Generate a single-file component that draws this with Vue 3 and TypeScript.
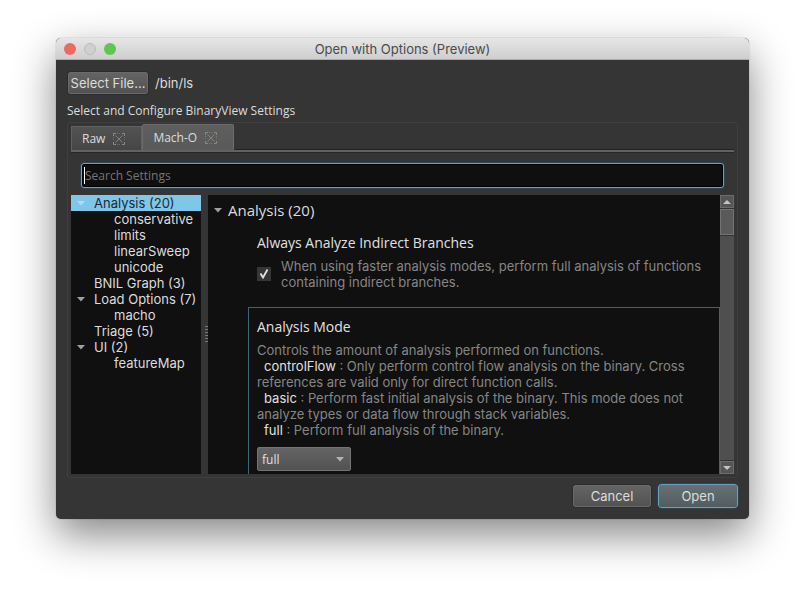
<script setup lang="ts">
import { ref } from 'vue'

interface TreeItem {
  label: string
  level: number
  open?: boolean
  selected?: boolean
}

const tabs: string[] = ['Raw', 'Mach-O']
const activeTab = ref('Mach-O')
const search = ref('')
const indirect = ref(true)
const mode = ref('full')

const tree: TreeItem[] = [
  { label: 'Analysis (20)', level: 0, open: true, selected: true },
  { label: 'conservative', level: 1 },
  { label: 'limits', level: 1 },
  { label: 'linearSweep', level: 1 },
  { label: 'unicode', level: 1 },
  { label: 'BNIL Graph (3)', level: 0 },
  { label: 'Load Options (7)', level: 0, open: true },
  { label: 'macho', level: 1 },
  { label: 'Triage (5)', level: 0 },
  { label: 'UI (2)', level: 0, open: true },
  { label: 'featureMap', level: 1 },
]
</script>

<template>
  <main class="page">
    <section class="window">
      <header class="titlebar">
        <div class="lights">
          <button class="light red" type="button" aria-label="Close"></button>
          <button class="light off" type="button" aria-label="Minimize" disabled></button>
          <button class="light green" type="button" aria-label="Zoom"></button>
        </div>
        <h1 class="title">Open with Options (Preview)</h1>
      </header>

      <div class="body">
        <div class="file-row">
          <button class="btn file-btn" type="button">Select File...</button>
          <span class="path">/bin/ls</span>
        </div>
        <p class="caption">Select and Configure BinaryView Settings</p>

        <div class="frame">
          <div class="tabs">
            <div v-for="t in tabs" :key="t" class="tab" :class="{ active: t === activeTab }">
              <button class="tab-name" type="button" @click="activeTab = t">{{ t }}</button>
              <button class="tab-close" type="button" :aria-label="'Close ' + t">
                <svg width="12" height="12" viewBox="0 0 12 12" fill="none" stroke="#8a8a80">
                  <path d="M.5 3V.5H3M9 .5H11.500V3M11.500 9V11.500H9M3 11.500H.5V9" />
                  <path d="M4 .5H8M.5 4V8M11.500 4V8M4 11.500H8" stroke-opacity=".6" stroke-dasharray="1 1" />
                  <path d="M2.500 2.500L9.500 9.500M9.500 2.500L2.500 9.500" stroke-opacity=".85" />
                </svg>
              </button>
            </div>
          </div>

          <div class="search">
            <input v-model="search" type="text" placeholder="Search Settings" aria-label="Search Settings" />
            <span class="caret"></span>
          </div>

          <div class="split">
            <ul class="tree">
              <li
                v-for="item in tree"
                :key="item.label"
                :class="{ child: item.level === 1, selected: item.selected }"
              >
                <svg v-if="item.open" class="arrow" width="8" height="5" viewBox="0 0 8 5">
                  <path d="M0 0H8L4 4.500Z" fill="currentColor" />
                </svg>
                <span>{{ item.label }}</span>
              </li>
            </ul>

            <div class="handle"><span class="grip"></span></div>

            <div class="pane">
              <div class="content">
                <h2 class="group">
                  <svg class="arrow" width="8" height="5" viewBox="0 0 8 5">
                    <path d="M0 0H8L4 4.500Z" fill="currentColor" />
                  </svg>
                  <span>Analysis (20)</span>
                </h2>

                <div class="setting">
                  <h3>Always Analyze Indirect Branches</h3>
                  <div class="check-row">
                    <span class="check">
                      <input id="indirect" v-model="indirect" type="checkbox" />
                      <svg v-if="indirect" width="14" height="14" viewBox="0 0 14 14" fill="none">
                        <path d="M3.500 6.500L6 10.500L10.500 2.500" stroke="#e2e2e2" stroke-width="1.800" />
                      </svg>
                    </span>
                    <label for="indirect">
                      When using faster analysis modes, perform full analysis of functions containing indirect branches.
                    </label>
                  </div>
                </div>

                <div class="setting focused">
                  <h3><label for="mode">Analysis Mode</label></h3>
                  <div class="desc">
                    <p>Controls the amount of analysis performed on functions.</p>
                    <p class="option">
                      <b>controlFlow</b> : Only perform control flow analysis on the binary. Cross references are valid
                      only for direct function calls.
                    </p>
                    <p class="option">
                      <b>basic</b> : Perform fast initial analysis of the binary. This mode does not analyze types or
                      data flow through stack variables.
                    </p>
                    <p class="option"><b>full</b> : Perform full analysis of the binary.</p>
                  </div>
                  <div class="select">
                    <select id="mode" v-model="mode">
                      <option>controlFlow</option>
                      <option>basic</option>
                      <option>full</option>
                    </select>
                    <svg class="arrow" width="8" height="5" viewBox="0 0 8 5">
                      <path d="M0 0H8L4 4.500Z" fill="currentColor" />
                    </svg>
                  </div>
                </div>
              </div>

              <div class="scrollbar">
                <button class="step" type="button" aria-label="Scroll up">
                  <svg width="8" height="4" viewBox="0 0 8 4"><path d="M0 4H8L4 0Z" fill="#c4c4c4" /></svg>
                </button>
                <div class="track"><div class="thumb"></div></div>
                <button class="step" type="button" aria-label="Scroll down">
                  <svg width="8" height="4" viewBox="0 0 8 4"><path d="M0 0H8L4 4Z" fill="#c4c4c4" /></svg>
                </button>
              </div>
            </div>
          </div>
        </div>

        <footer class="actions">
          <button class="btn cancel" type="button">Cancel</button>
          <button class="btn primary" type="button">Open</button>
        </footer>
      </div>
    </section>
  </main>
</template>

<style>
body {
  background: #fff;
}
</style>

<style scoped>
* {
  box-sizing: border-box;
}
h1,
h2,
h3,
p,
ul {
  margin: 0;
  padding: 0;
  font-weight: 400;
}
button {
  margin: 0;
  padding: 0;
  border: 0;
  background: none;
  color: inherit;
  font: inherit;
}
.page {
  display: flex;
  height: 100vh;
  min-height: 400px;
  padding: 38px 56px 74px;
  overflow: hidden;
  font-family: Inter, 'Liberation Sans', sans-serif;
  font-size: 13px;
  line-height: 16px;
  color: #dcdcdc;
}
.window {
  flex: 1;
  min-width: 0;
  display: flex;
  flex-direction: column;
  border-radius: 5px;
  background: #353535;
  box-shadow: 0 0 1px rgba(0, 0, 0, 0.5), 0 16px 42px rgba(0, 0, 0, 0.48);
}
.titlebar {
  display: grid;
  grid-template-columns: 1fr auto 1fr;
  align-items: center;
  height: 22px;
  padding: 0 8px;
  border-radius: 5px 5px 0 0;
  border-bottom: 1px solid #adadad;
  background: linear-gradient(#e6e6e6, #cecece);
}
.lights {
  display: flex;
  gap: 8px;
}
.light {
  width: 12px;
  height: 12px;
  border-radius: 50%;
}
.red {
  background: #ed6a5e;
}
.off {
  background: #d0d0d0;
  border: 1px solid #bcbcbc;
}
.green {
  background: #61c554;
}
.title {
  font-size: 13px;
  color: #4b4b4b;
}
.body {
  flex: 1;
  min-height: 0;
  display: flex;
  flex-direction: column;
  padding: 12px 11px 11px;
}
.file-row {
  display: flex;
  align-items: center;
  gap: 7px;
  padding-left: 1px;
}
.btn {
  height: 22px;
  border: 1px solid #6a6a6a;
  border-radius: 2px;
  outline: 1px solid #2c2c2c;
  background: linear-gradient(#646464, #525252);
}
.file-btn {
  width: 80px;
}
.caption {
  margin-top: 8px;
  font-family: 'Open Sans', 'Noto Sans', sans-serif;
  font-size: 12px;
  line-height: 18px;
}
.frame {
  flex: 1;
  min-height: 0;
  display: flex;
  flex-direction: column;
  margin-top: 2px;
  padding: 2px 3px 3px;
  border: 1px solid #3f3f3f;
  border-radius: 2px;
}
.tabs {
  display: flex;
  align-items: flex-end;
  height: 27px;
  border-bottom: 2px solid #626262;
  box-shadow: 0 1px 0 #262626, inset 0 -1px 0 #222;
}
.tab {
  display: flex;
  align-items: center;
  gap: 8px;
  height: 24px;
  padding: 0 16px 0 10px;
  border: 1px solid #606060;
  border-bottom: 0;
  background: linear-gradient(#525252, #464646);
  font-family: 'Open Sans', 'Noto Sans', sans-serif;
  font-size: 12px;
}
.tab.active {
  height: 26px;
  border-color: #6c6c6c;
  border-radius: 2px 2px 0 0;
  background: linear-gradient(#5e5e5e, #5a5a5a);
}
.tab-close {
  display: flex;
}
.search {
  position: relative;
  margin: 11px 10px 7px;
}
.search input {
  display: block;
  width: 100%;
  height: 25px;
  padding: 0 3px;
  border: 1px solid #6ba3c0;
  border-radius: 3px;
  outline: 0;
  background: #0f0f0f;
  box-shadow: 0 0 0 1px #2b4452, inset 0 0 0 1px #000;
  color: #dcdcdc;
  font: 12px 'Open Sans', 'Noto Sans', sans-serif;
}
.search input::placeholder {
  color: #767676;
  opacity: 1;
}
.caret {
  position: absolute;
  left: 3px;
  top: 4px;
  width: 1px;
  height: 17px;
  background: #fff;
}
.split {
  flex: 1;
  min-height: 0;
  display: flex;
}
.tree {
  width: 130px;
  overflow: hidden;
  background: #101010;
  list-style: none;
}
.tree li {
  position: relative;
  height: 16px;
  padding-left: 23px;
  white-space: nowrap;
}
.tree li.child {
  padding-left: 43px;
}
.tree li.selected {
  background: #80c6e9;
  color: #1c2a33;
}
.arrow {
  color: #a0a0a0;
}
.tree .arrow {
  position: absolute;
  left: 6px;
  top: 6px;
}
.tree .selected .arrow {
  color: #b5d9ea;
}
.handle {
  display: flex;
  align-items: center;
  justify-content: flex-end;
  width: 7px;
}
.grip {
  width: 3px;
  height: 18px;
  background: repeating-linear-gradient(#777 0 1px, transparent 1px 3px);
}
.pane {
  flex: 1;
  min-width: 0;
  display: flex;
  background: #101010;
}
.content {
  flex: 1;
  min-width: 0;
  display: flex;
  flex-direction: column;
  overflow: hidden;
}
.group {
  display: flex;
  align-items: center;
  gap: 6px;
  padding: 5px 6px 0;
  font-size: 15px;
  line-height: 20px;
  font-family: 'Open Sans', 'Noto Sans', sans-serif;
}
.setting {
  flex: none;
  margin-left: 40px;
  padding: 12px 8px 0;
  border: 1px solid transparent;
  color: #868686;
}
.setting h3 {
  color: #e0e0e0;
  font-family: 'Open Sans', 'Noto Sans', sans-serif;
  font-size: 14px;
  line-height: 20px;
}
.check-row {
  display: flex;
  align-items: center;
  gap: 10px;
  padding: 5px 0 16px;
}
.check {
  position: relative;
  flex: none;
  width: 14px;
  height: 14px;
}
.check input {
  display: block;
  appearance: none;
  width: 14px;
  height: 14px;
  margin: 0;
  background: #363636;
}
.check svg {
  position: absolute;
  inset: 0;
  pointer-events: none;
}
.setting.focused {
  flex: 1 0 auto;
  padding: 9px 8px 10px;
  border-color: #3d6478;
}
.desc {
  margin-top: 5px;
}
.option::before {
  content: '';
  display: inline-block;
  width: 7px;
}
.option b {
  color: #e0e0e0;
  font-weight: 400;
}
.select {
  position: relative;
  width: 94px;
  margin-top: 9px;
}
.select select {
  display: block;
  appearance: none;
  width: 100%;
  height: 24px;
  padding: 0 4px;
  border: 1px solid #747474;
  border-radius: 2px;
  background: linear-gradient(#646464, #525252);
  color: #e0e0e0;
  font: 12px 'Open Sans', 'Noto Sans', sans-serif;
}
.select .arrow {
  position: absolute;
  right: 7px;
  top: 10px;
  color: #b4b4b4;
  pointer-events: none;
}
.scrollbar {
  display: flex;
  flex-direction: column;
  width: 14px;
  background: #4f4f4f;
}
.step {
  display: flex;
  align-items: center;
  justify-content: center;
  height: 13px;
  border: 1px solid #6c6c6c;
  background: #555;
}
.track {
  flex: 1;
  border-top: 1px solid #333;
  border-bottom: 1px solid #333;
}
.thumb {
  height: 26px;
  border: 1px solid #747474;
  background: #5a5a5a;
  box-shadow: 0 1px 0 #333;
}
.actions {
  display: flex;
  align-items: center;
  justify-content: flex-end;
  gap: 7px;
  margin-top: 6px;
}
.cancel {
  width: 78px;
}
.primary {
  width: 80px;
  height: 24px;
  border-color: #66a0be;
  border-radius: 3px;
  outline-color: #2b4452;
  background: linear-gradient(#667075, #545c60);
}
</style>
